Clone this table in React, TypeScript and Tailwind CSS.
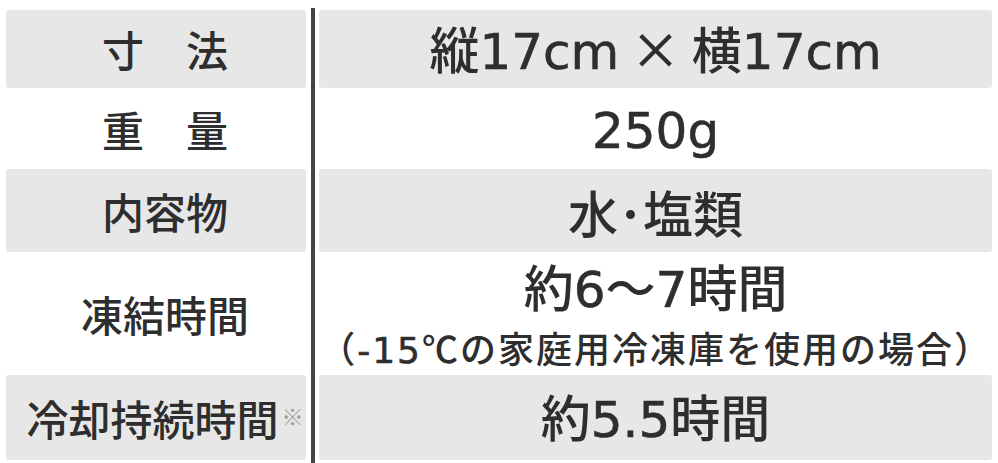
import React from "react";

interface Spec {
  label: string;
  value: string;
  note?: string;
  mark?: boolean;
  gray: boolean;
  h: string;
}

const rows: Spec[] = [
  { label: "寸　法", value: "縦17cm × 横17cm", gray: true, h: "h-[78px]" },
  { label: "重　量", value: "250g", gray: false, h: "h-[81px]" },
  { label: "内容物", value: "水･塩類", gray: true, h: "h-[83px]" },
  {
    label: "凍結時間",
    value: "約6〜7時間",
    note: "（-15℃の家庭用冷凍庫を使用の場合）",
    gray: false,
    h: "h-[123px]",
  },
  { label: "冷却持続時間", value: "約5.5時間", mark: true, gray: true, h: "h-[85px]" },
];

// latin runs use a Verdana-like face, like the original Meiryo
function Mixed({ text }: { text: string }) {
  const parts = text.split(/([0-9A-Za-z.\-]+)/);
  return (
    <>
      {parts.map((p, i) =>
        /[0-9A-Za-z]/.test(p) ? (
          <span key={i} className="font-['DejaVu_Sans',sans-serif] [-webkit-text-stroke:0.6px_#2e2e2e]">
            {p}
          </span>
        ) : (
          <React.Fragment key={i}>{p}</React.Fragment>
        )
      )}
    </>
  );
}

export default function App() {
  return (
    <div className="w-[998px] h-[463px] bg-white overflow-hidden font-['Noto_Sans_CJK_JP',sans-serif] font-medium text-[#2e2e2e]">
      <div className="flex pt-[10px] px-[6px]">
        {/* labels */}
        <div className="w-[301px] flex flex-col">
          {rows.map((r) => (
            <div
              key={r.label}
              className={`${r.h} ${r.gray ? "bg-[#e7e7e7]" : "bg-white"} rounded-[3px] flex items-center justify-center pl-[18px] text-[42px] leading-none`}
            >
              <span>{r.label}</span>
              {r.mark && (
                <span className="ml-[3px] text-[22px] text-[#a0a0a0] -translate-y-[3px]">※</span>
              )}
            </div>
          ))}
        </div>

        {/* divider */}
        <div className="w-[13px] flex justify-center -mt-[2px]">
          <div className="w-[4px] h-[455px] bg-[#444]" />
        </div>

        {/* values */}
        <div className="flex-1 flex flex-col">
          {rows.map((r) => (
            <div
              key={r.value}
              className={`${r.h} ${r.gray ? "bg-[#e7e7e7]" : "bg-white"} rounded-[3px] flex flex-col items-center justify-center`}
            >
              <div className={`text-[50px] ${r.note ? "leading-[66px]" : "leading-none"}`}>
                <Mixed text={r.value} />
              </div>
              {r.note && (
                <div className="text-[36px] tracking-[2px] leading-[48px] whitespace-nowrap">
                  <Mixed text={r.note} />
                </div>
              )}
            </div>
          ))}
        </div>
      </div>
    </div>
  );
}
